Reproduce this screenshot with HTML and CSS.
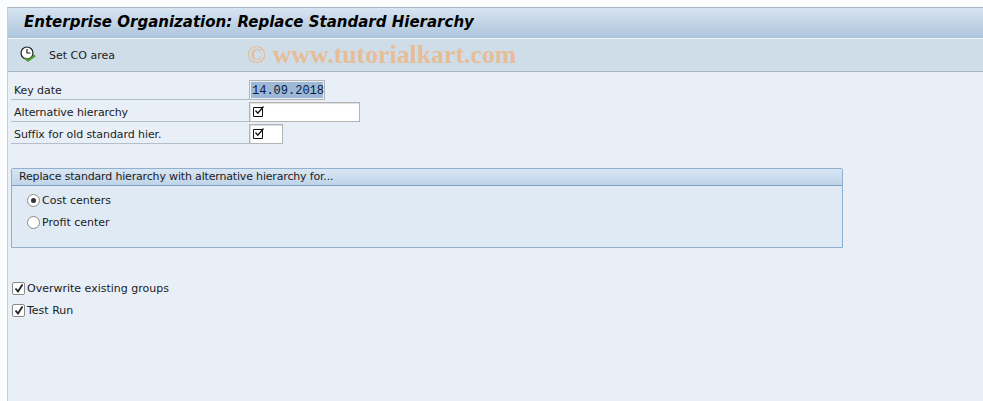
FILE: index.html
```html
<!DOCTYPE html>
<html>
<head>
<meta charset="UTF-8" />
<title>Enterprise Organization: Replace Standard Hierarchy</title>
<link rel="stylesheet" href="styles.css">
</head>
<body>
<div class="window">
	<div class="title-bar">Enterprise Organization: Replace Standard Hierarchy</div>
	<div class="tool-bar">
		<svg class="clock-icon" width="18" height="18" viewBox="0 0 18 18">
			<circle cx="8" cy="7" r="6" fill="#fff" stroke="#222" stroke-width="1.2"/>
			<path d="M8 3V7H11.5" fill="none" stroke="#222" stroke-width="1.2"/>
			<path d="M6 12L9 14.5L16 9.5" fill="none" stroke="#4f9a2e" stroke-width="2.2"/>
		</svg>
		<span class="tool-text">Set CO area</span>
		<span class="watermark">© www.tutorialkart.com</span>
	</div>
	<div class="content">
		<div class="form">
			<div class="row">
				<div class="row-label">Key date</div>
				<div class="field field-date"><span class="selected">14.09.2018</span></div>
			</div>
			<div class="row">
				<div class="row-label">Alternative hierarchy</div>
				<div class="field field-long">
					<svg class="req" width="13" height="13" viewBox="0 0 13 13"><path d="M1.5 2.5H10.5V11.5H1.5Z" fill="none" stroke="#111"/><path d="M3.5 5.5L5.8 8.2L11.5 1.5" fill="none" stroke="#111" stroke-width="1.3"/></svg>
				</div>
			</div>
			<div class="row">
				<div class="row-label">Suffix for old standard hier.</div>
				<div class="field field-short">
					<svg class="req" width="13" height="13" viewBox="0 0 13 13"><path d="M1.5 2.5H10.5V11.5H1.5Z" fill="none" stroke="#111"/><path d="M3.5 5.5L5.8 8.2L11.5 1.5" fill="none" stroke="#111" stroke-width="1.3"/></svg>
				</div>
			</div>
		</div>

		<div class="group">
			<div class="group-head">Replace standard hierarchy with alternative hierarchy for...</div>
			<div class="group-body">
				<div class="radio-row"><span class="radio radio-on"></span>Cost centers</div>
				<div class="radio-row"><span class="radio"></span>Profit center</div>
			</div>
		</div>

		<div class="checks">
			<div class="check-row">
				<span class="check"><svg width="10" height="10" viewBox="0 0 10 10"><path d="M1.5 5.5L4 8.5L8.5 1.5" fill="none" stroke="#222" stroke-width="1.8"/></svg></span>Overwrite existing groups
			</div>
			<div class="check-row">
				<span class="check"><svg width="10" height="10" viewBox="0 0 10 10"><path d="M1.5 5.5L4 8.5L8.5 1.5" fill="none" stroke="#222" stroke-width="1.8"/></svg></span>Test Run
			</div>
		</div>
	</div>
</div>
</body>
</html>
```

FILE: styles.css
```css
html, body {
	margin: 0;
	height: 100%;
}

body {
	background: #fbfcfe;
	font-family: "DejaVu Sans", sans-serif;
	font-size: 11px;
	color: #1c1c1c;
	overflow: hidden;
}

.window {
	margin: 7px 0 0 7px;
	height: 394px;
	border-left: 1px solid #c5ced9;
	border-top: 1px solid #a9b4c4;
	background: #e8eff7;
}

.title-bar {
	height: 30px;
	line-height: 29px;
	padding-left: 16px;
	font-size: 15px;
	font-weight: bold;
	font-style: italic;
	color: #000;
	background: linear-gradient(#d7e4f1, #adc5dc);
}

.tool-bar {
	height: 32px;
	display: flex;
	align-items: center;
	border-top: 1px solid #eef3f8;
	border-bottom: 1px solid #a6b5c7;
	background: #cfdde9;
}

.clock-icon {
	margin-left: 11px;
}

.tool-text {
	margin-left: 12px;
	width: 150px;
}

.watermark {
	margin-left: 48px;
	font-family: "Liberation Serif", serif;
	font-size: 25.8px;
	font-weight: bold;
	color: #e6bd98;
	white-space: nowrap;
}

.content {
	padding: 6px 0 0 3px;
}

.form {
	width: 350px;
}

.row {
	height: 22px;
	display: flex;
}

.row-label {
	width: 235px;
	height: 21px;
	line-height: 26px;
	border-bottom: 1px solid #b5bfca;
	padding-left: 3px;
	letter-spacing: -0.08px;
}

.field {
	box-sizing: border-box;
	height: 20px;
	margin-top: 2px;
	border: 1px solid #b3b3b3;
	background: #fff;
	box-shadow: inset 1px 1px 1px #ddd;
}

.field-date {
	width: 76px;
	font-family: "Liberation Mono", monospace;
	font-size: 12px;
	line-height: 18px;
	padding: 1px;
	background: #e8eff7;
	box-shadow: none;
	color: #0a1a3c;
}

.selected {
	display: block;
	height: 16px;
	padding-left: 1px;
	background: #9db8d6;
}

.field-long {
	width: 111px;
}

.field-short {
	width: 34px;
}

.req {
	display: block;
	margin: 2px 0 0 2px;
}

.group {
	margin-top: 24px;
	width: 832px;
	height: 80px;
	box-sizing: border-box;
	border: 1px solid #8fb0cf;
	border-radius: 2px 2px 0 0;
	background: #dfeaf4;
}

.group-head {
	height: 17px;
	line-height: 16px;
	padding-left: 7px;
	box-sizing: border-box;
	border-bottom: 1px solid #7f9fbf;
	background: linear-gradient(#d9e6f3, #bfd4e9);
	letter-spacing: -0.17px;
}

.group-body {
	padding: 3px 0 0 15px;
}

.radio-row {
	height: 22px;
	display: flex;
	align-items: center;
}

.radio {
	width: 13px;
	height: 13px;
	box-sizing: border-box;
	border: 1px solid #8a8a8a;
	border-radius: 50%;
	background: #fff;
	margin-right: 2px;
	display: flex;
	align-items: center;
	justify-content: center;
}

.radio-on::after {
	content: "";
	width: 5px;
	height: 5px;
	border-radius: 50%;
	background: #333;
}

.checks {
	margin-top: 29px;
}

.check-row {
	height: 22px;
	display: flex;
	align-items: center;
	padding-left: 1px;
}

.check {
	width: 13px;
	height: 13px;
	box-sizing: border-box;
	border: 1px solid #8a8a8a;
	border-radius: 2px;
	background: #fff;
	margin-right: 2px;
	display: flex;
	align-items: center;
	justify-content: center;
}
```
